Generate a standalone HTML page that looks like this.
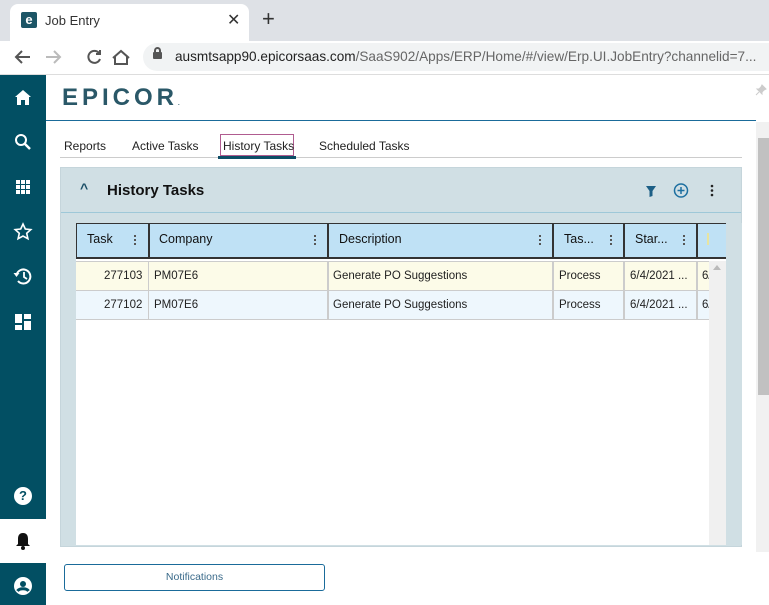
<!DOCTYPE html>
<html><head><style>
*{margin:0;padding:0;box-sizing:border-box}
body{width:769px;height:605px;overflow:hidden;position:relative;background:#fff;font-family:"Liberation Sans",sans-serif;}
.a{position:absolute}
.hd{font-size:12.5px;color:#111;}
.cell{position:absolute;font-size:11.5px;color:#222;line-height:28px;white-space:nowrap;overflow:hidden}
.dots{position:absolute;width:3px;}
.dots i{display:block;width:2px;height:2px;background:#555;margin-bottom:2px}
</style></head><body>
<div class="a" style="left:0;top:0;width:769px;height:41px;background:#dee1e6"></div>
<div class="a" style="left:10px;top:4px;width:239px;height:37px;background:#fff;border-radius:8px 8px 0 0"></div>
<div class="a" style="left:21px;top:12px;width:16px;height:16px;background:#1c5566;border-radius:2px;color:#fff;font-weight:bold;font-size:13px;line-height:15px;text-align:center">e</div>
<div class="a" style="left:45px;top:13px;font-size:13px;color:#333">Job Entry</div>
<div class="a" style="left:227px;top:10px;font-size:16px;color:#333">✕</div>
<div class="a" style="left:262px;top:6px;font-size:22px;color:#333">+</div>
<div class="a" style="left:0;top:41px;width:769px;height:34px;background:#fff;border-bottom:1px solid #ddd"></div>
<svg class="a" style="left:12px;top:47px" width="120" height="20" viewBox="0 0 120 20" fill="none" stroke-width="2">
<path d="M18 10H4M10 4L4 10l6 6" stroke="#555"/>
<path d="M34 10h14M42 4l6 6-6 6" stroke="#bbb"/>
<path d="M87 6a6 6 0 1 0 1 6M88 3v4h-4" stroke="#555"/>
<path d="M101 11l8-7 8 7M103 9v8h12V9" stroke="#555"/>
</svg>
<div class="a" style="left:143px;top:43px;width:640px;height:28px;background:#f1f3f4;border-radius:14px"></div>
<div class="a" style="left:153px;top:52px;width:9px;height:7px;background:#555;border-radius:1px"></div>
<div class="a" style="left:154px;top:47px;width:7px;height:7px;border:2px solid #555;border-bottom:none;border-radius:4px 4px 0 0"></div>
<div class="a" style="left:175px;top:49px;font-size:13.6px;color:#222;white-space:nowrap">ausmtsapp90.epicorsaas.com<span style="color:#666">/SaaS902/Apps/ERP/Home/#/view/Erp.UI.JobEntry?channelid=7...</span></div>
<div class="a" style="left:0;top:75px;width:46px;height:530px;background:#024f63"></div>
<div class="a" style="left:0;top:519px;width:46px;height:44px;background:#fff"></div>
<svg class="a" style="left:13px;top:87px" width="20" height="260" viewBox="0 0 20 260" fill="#fff">
<path d="M2 10L10 3l8 7h-2v8h-4v-5H8v5H4v-8z"/>
<circle cx="8" cy="53" r="5" fill="none" stroke="#fff" stroke-width="2"/><path d="M11 56l6 6" stroke="#fff" stroke-width="2.5"/>
<g><rect x="3" y="93" width="4" height="4"/><rect x="8" y="93" width="4" height="4"/><rect x="13" y="93" width="4" height="4"/><rect x="3" y="98" width="4" height="4"/><rect x="8" y="98" width="4" height="4"/><rect x="13" y="98" width="4" height="4"/><rect x="3" y="103" width="4" height="4"/><rect x="8" y="103" width="4" height="4"/><rect x="13" y="103" width="4" height="4"/></g>
<path d="M10 137l2.3 5 5.5.6-4.1 3.7 1.2 5.4L10 149l-4.9 2.7 1.2-5.4-4.1-3.7 5.5-.6z" fill="none" stroke="#fff" stroke-width="1.6"/>
<path d="M3.5 188a7 7 0 1 1 1.5 6" fill="none" stroke="#fff" stroke-width="2"/><path d="M0.5 186l3 4 3-4z"/><path d="M11 185v5l3 2" fill="none" stroke="#fff" stroke-width="1.8"/>
<rect x="2" y="227" width="7" height="9"/><rect x="11" y="227" width="7" height="5"/><rect x="2" y="238" width="7" height="5"/><rect x="11" y="234" width="7" height="9"/>
</svg>
<div class="a" style="left:14px;top:487px;width:18px;height:18px;border-radius:50%;background:#fff;color:#024f63;font-weight:bold;font-size:13px;line-height:18px;text-align:center">?</div>
<svg class="a" style="left:14px;top:531px" width="18" height="20" viewBox="0 0 18 20"><path d="M9 2c-4 0-5 3-5 6v5l-2 2h14l-2-2V8c0-3-1-6-5-6z" fill="#111"/><circle cx="9" cy="17" r="2" fill="#111"/></svg>
<svg class="a" style="left:14px;top:577px" width="18" height="18" viewBox="0 0 18 18"><circle cx="9" cy="9" r="9" fill="#fff"/><circle cx="9" cy="7" r="3" fill="#024f63"/><path d="M3.5 14c2-3 9-3 11 0" stroke="#024f63" stroke-width="3" fill="none"/></svg>
<div class="a" style="left:62px;top:84px;font-size:24px;font-weight:bold;letter-spacing:4px;color:#2a5868">EPICOR<span style="font-size:6px">.</span></div>
<div class="a" style="left:46px;top:120px;width:710px;height:1px;background:#1a6b9a"></div>
<svg class="a" style="left:755px;top:84px" width="12" height="12" viewBox="0 0 12 12"><path d="M7 1l4 4-2 1-2 2 0 2-5-5 2 0 2-2z M4 8l-3 3" fill="#ccc" stroke="#ccc" stroke-width="1"/></svg>
<div class="a" style="left:756px;top:122px;width:13px;height:430px;background:#f1f1f1"></div>
<div class="a" style="left:758px;top:138px;width:11px;height:257px;background:#c1c1c1"></div>
<div class="a" style="left:64px;top:139px;font-size:12px;color:#222">Reports</div>
<div class="a" style="left:132px;top:139px;font-size:12px;color:#222">Active Tasks</div>
<div class="a" style="left:220px;top:134px;width:74px;height:22px;border:1px solid #b05c90"></div>
<div class="a" style="left:223px;top:139px;font-size:12px;color:#222">History Tasks</div>
<div class="a" style="left:319px;top:139px;font-size:12px;color:#222">Scheduled Tasks</div>
<div class="a" style="left:60px;top:157px;width:682px;height:1px;background:#ccc"></div>
<div class="a" style="left:218px;top:156px;width:78px;height:3px;background:#0d4d66"></div>
<div class="a" style="left:60px;top:167px;width:682px;height:380px;background:#d0dfe4;border:1px solid #c5d5db"></div>
<div class="a" style="left:61px;top:212px;width:680px;height:1px;background:#9ec8d8"></div>
<div class="a" style="left:80px;top:180px;font-size:14px;color:#1a4e66;font-weight:bold">^</div>
<div class="a" style="left:107px;top:182px;font-size:15px;font-weight:bold;color:#111">History Tasks</div>
<svg class="a" style="left:645px;top:183px" width="80" height="16"><path d="M1 3h10L7.5 8v5l-3 1V8z" fill="#1c5f86"/><circle cx="36" cy="7.5" r="6.5" fill="none" stroke="#1c6fa0" stroke-width="1.5"/><path d="M36 4v7M32.5 7.5h7" stroke="#1c6fa0" stroke-width="1.5"/><circle cx="67" cy="3" r="1.3" fill="#222"/><circle cx="67" cy="7.5" r="1.3" fill="#222"/><circle cx="67" cy="12" r="1.3" fill="#222"/></svg>
<div class="a" style="left:76px;top:223px;width:650px;height:322px;background:#fff"></div>
<div class="a" style="left:76px;top:223px;width:650px;height:36px;background:#bfe1f5;border:1px solid #333;border-right:none;border-bottom:2px solid #333"></div>
<div class="a" style="left:148px;top:223px;width:2px;height:36px;background:#333"></div>
<div class="a" style="left:327px;top:223px;width:2px;height:36px;background:#333"></div>
<div class="a" style="left:552px;top:223px;width:2px;height:36px;background:#333"></div>
<div class="a" style="left:623px;top:223px;width:2px;height:36px;background:#333"></div>
<div class="a" style="left:696px;top:223px;width:2px;height:36px;background:#333"></div>
<div class="a" style="left:707px;top:233px;width:2px;height:12px;background:#e8e4a0"></div>
<div class="a" style="left:726px;top:223px;width:16px;height:322px;background:#d0dfe4"></div>
<div class="a hd" style="left:87px;top:232px">Task</div>
<div class="a hd" style="left:159px;top:232px">Company</div>
<div class="a hd" style="left:339px;top:232px">Description</div>
<div class="a hd" style="left:564px;top:232px">Tas...</div>
<div class="a hd" style="left:635px;top:232px">Star...</div>
<div class="dots a" style="left:134px;top:235px"><i></i><i></i><i></i></div>
<div class="dots a" style="left:314px;top:235px"><i></i><i></i><i></i></div>
<div class="dots a" style="left:539px;top:235px"><i></i><i></i><i></i></div>
<div class="dots a" style="left:610px;top:235px"><i></i><i></i><i></i></div>
<div class="dots a" style="left:683px;top:235px"><i></i><i></i><i></i></div>
<div class="a" style="left:76px;top:261px;width:633px;height:30px;background:#fcfbe8;border-top:1px solid #ccc;border-bottom:1px solid #ccc"></div>
<div class="a" style="left:76px;top:291px;width:633px;height:29px;background:#eef7fd;border-bottom:1px solid #ccc"></div>
<div class="a" style="left:148px;top:261px;width:1px;height:59px;background:#ccc"></div>
<div class="a" style="left:327px;top:261px;width:2px;height:59px;background:#ccc"></div>
<div class="a" style="left:552px;top:261px;width:2px;height:59px;background:#ccc"></div>
<div class="a" style="left:623px;top:261px;width:2px;height:59px;background:#ccc"></div>
<div class="a" style="left:696px;top:261px;width:2px;height:59px;background:#ccc"></div>
<div class="cell" style="left:104px;top:262px">277103</div>
<div class="cell" style="left:154px;top:262px">PM07E6</div>
<div class="cell" style="left:333px;top:262px">Generate PO Suggestions</div>
<div class="cell" style="left:559px;top:262px">Process</div>
<div class="cell" style="left:630px;top:262px">6/4/2021 ...</div>
<div class="cell" style="left:702px;top:262px;width:7px">6/</div>
<div class="cell" style="left:104px;top:291px">277102</div>
<div class="cell" style="left:154px;top:291px">PM07E6</div>
<div class="cell" style="left:333px;top:291px">Generate PO Suggestions</div>
<div class="cell" style="left:559px;top:291px">Process</div>
<div class="cell" style="left:630px;top:291px">6/4/2021 ...</div>
<div class="cell" style="left:702px;top:291px;width:7px">6/</div>
<div class="a" style="left:709px;top:261px;width:17px;height:284px;background:#f0f0f0"></div>
<div class="a" style="left:713px;top:265px;width:0;height:0;border-left:4px solid transparent;border-right:4px solid transparent;border-bottom:5px solid #bbb"></div>
<div class="a" style="left:64px;top:564px;width:261px;height:27px;border:1px solid #1a6b9a;border-radius:3px;font-size:10.5px;color:#3a6a8a;text-align:center;line-height:25px">Notifications</div>
</body></html>
